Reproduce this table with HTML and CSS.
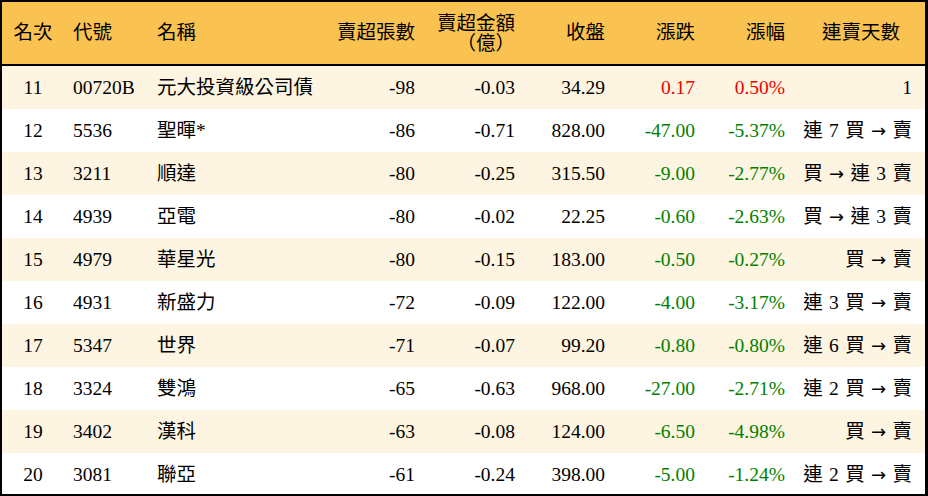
FILE: index.html
```html
<!DOCTYPE html>
<html lang="zh-Hant">
<head>
<meta charset="utf-8">
<link rel="stylesheet" href="styles.css">
</head>
<body>
<div class="frame">
<table class="rank">
<colgroup>
<col class="c1"><col class="c2"><col class="c3"><col class="c4"><col class="c5"><col class="c6"><col class="c7"><col class="c8"><col class="c9">
</colgroup>
<thead>
<tr>
<th class="ctr">名次</th>
<th class="lft">代號</th>
<th class="lft">名稱</th>
<th class="rgt">賣超張數</th>
<th class="rgt two">賣超金額<br>（億）</th>
<th class="rgt">收盤</th>
<th class="rgt">漲跌</th>
<th class="rgt">漲幅</th>
<th class="ctr last">連賣天數</th>
</tr>
</thead>
<tbody>
<tr class="alt"><td class="ctr">11</td><td class="lft">00720B</td><td class="lft">元大投資級公司債</td><td class="rgt">-98</td><td class="rgt">-0.03</td><td class="rgt">34.29</td><td class="rgt up">0.17</td><td class="rgt up">0.50%</td><td class="rgt end">1</td></tr>
<tr><td class="ctr">12</td><td class="lft">5536</td><td class="lft">聖暉*</td><td class="rgt">-86</td><td class="rgt">-0.71</td><td class="rgt">828.00</td><td class="rgt dn">-47.00</td><td class="rgt dn">-5.37%</td><td class="rgt end">連 7 買 <span class="arr">→</span> 賣</td></tr>
<tr class="alt"><td class="ctr">13</td><td class="lft">3211</td><td class="lft">順達</td><td class="rgt">-80</td><td class="rgt">-0.25</td><td class="rgt">315.50</td><td class="rgt dn">-9.00</td><td class="rgt dn">-2.77%</td><td class="rgt end">買 <span class="arr">→</span> 連 3 賣</td></tr>
<tr><td class="ctr">14</td><td class="lft">4939</td><td class="lft">亞電</td><td class="rgt">-80</td><td class="rgt">-0.02</td><td class="rgt">22.25</td><td class="rgt dn">-0.60</td><td class="rgt dn">-2.63%</td><td class="rgt end">買 <span class="arr">→</span> 連 3 賣</td></tr>
<tr class="alt"><td class="ctr">15</td><td class="lft">4979</td><td class="lft">華星光</td><td class="rgt">-80</td><td class="rgt">-0.15</td><td class="rgt">183.00</td><td class="rgt dn">-0.50</td><td class="rgt dn">-0.27%</td><td class="rgt end">買 <span class="arr">→</span> 賣</td></tr>
<tr><td class="ctr">16</td><td class="lft">4931</td><td class="lft">新盛力</td><td class="rgt">-72</td><td class="rgt">-0.09</td><td class="rgt">122.00</td><td class="rgt dn">-4.00</td><td class="rgt dn">-3.17%</td><td class="rgt end">連 3 買 <span class="arr">→</span> 賣</td></tr>
<tr class="alt"><td class="ctr">17</td><td class="lft">5347</td><td class="lft">世界</td><td class="rgt">-71</td><td class="rgt">-0.07</td><td class="rgt">99.20</td><td class="rgt dn">-0.80</td><td class="rgt dn">-0.80%</td><td class="rgt end">連 6 買 <span class="arr">→</span> 賣</td></tr>
<tr><td class="ctr">18</td><td class="lft">3324</td><td class="lft">雙鴻</td><td class="rgt">-65</td><td class="rgt">-0.63</td><td class="rgt">968.00</td><td class="rgt dn">-27.00</td><td class="rgt dn">-2.71%</td><td class="rgt end">連 2 買 <span class="arr">→</span> 賣</td></tr>
<tr class="alt"><td class="ctr">19</td><td class="lft">3402</td><td class="lft">漢科</td><td class="rgt">-63</td><td class="rgt">-0.08</td><td class="rgt">124.00</td><td class="rgt dn">-6.50</td><td class="rgt dn">-4.98%</td><td class="rgt end">買 <span class="arr">→</span> 賣</td></tr>
<tr><td class="ctr">20</td><td class="lft">3081</td><td class="lft">聯亞</td><td class="rgt">-61</td><td class="rgt">-0.24</td><td class="rgt">398.00</td><td class="rgt dn">-5.00</td><td class="rgt dn">-1.24%</td><td class="rgt end">連 2 買 <span class="arr">→</span> 賣</td></tr>
</tbody>
</table>
</div>
</body>
</html>
```
FILE: styles.css
```css
html, body {
  margin: 0;
  padding: 0;
  background: #ffffff;
}

.frame {
  width: 923px;
  height: 492px;
  border-top: 2px solid #000;
  border-left: 2px solid #000;
  border-bottom: 2px solid #000;
  border-right: 3px solid #000;
  overflow: hidden;
}

.rank {
  width: 923px;
  table-layout: fixed;
  border-collapse: collapse;
  border-spacing: 0;
  font-family: "Liberation Serif", "Noto Sans CJK TC", serif;
  font-size: 19.5px;
  color: #000;
}

.c1 { width: 62px; }
.c2 { width: 84px; }
.c3 { width: 182px; }
.c4 { width: 95px; }
.c5 { width: 100px; }
.c6 { width: 90px; }
.c7 { width: 90px; }
.c8 { width: 90px; }
.c9 { width: 130px; }

.rank th {
  height: 60px;
  padding: 0;
  background: #f9c251;
  font-weight: normal;
  line-height: 20px;
  border-bottom: 2px solid #000;
  white-space: nowrap;
}

.rank th.two {
  padding-top: 2px;
  vertical-align: middle;
}

.rank td {
  height: 43px;
  padding: 0;
  white-space: nowrap;
  line-height: 43px;
}

.rank tr.alt td {
  background: #fdf4e1;
}

.rank td.end {
  word-spacing: 1.5px;
}

.arr {
  font-family: "DejaVu Sans", sans-serif;
  font-size: 18px;
}

.ctr { text-align: center; }
.lft { text-align: left; padding-left: 9px !important; }
.rgt { text-align: right; padding-right: 10px !important; }
.rank td.end { padding-right: 13px !important; }
.rank th.last { text-align: right; padding-right: 25px !important; }

.up { color: #ee0000; }
.dn { color: #008000; }
```
